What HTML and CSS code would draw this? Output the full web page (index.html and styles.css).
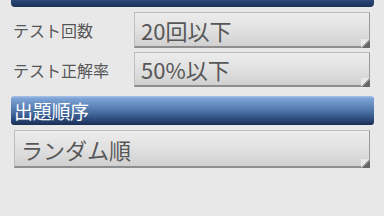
FILE: index.html
```html
<!DOCTYPE html>
<html lang="ja">
<head>
<meta charset="utf-8">
<link rel="stylesheet" href="styles.css">
</head>
<body>
<div class="page">
  <div class="topbar"></div>
  <div class="rows">
    <div class="row row1">
      <div class="label">テスト回数</div>
      <div class="select">20回以下</div>
    </div>
    <div class="row row2">
      <div class="label">テスト正解率</div>
      <div class="select">50%以下</div>
    </div>
  </div>
  <div class="section">出題順序</div>
  <div class="select wide">ランダム順</div>
</div>
</body>
</html>
```
FILE: styles.css
```css
html, body {
  margin: 0;
  padding: 0;
  background: #e8e8e8;
}
.page {
  width: 384px;
  height: 216px;
  display: flex;
  flex-direction: column;
  font-family: "Noto Sans CJK JP", "Noto Sans", sans-serif;
  color: #555;
}
.topbar {
  margin-left: 11px;
  width: 363px;
  height: 7px;
  border-radius: 0 0 4px 4px;
  background: linear-gradient(#2b4878, #1b3057);
}
.rows {
  display: flex;
  flex-direction: column;
  gap: 4px;
  margin-top: 5px;
  padding-left: 13px;
}
.row {
  display: flex;
  align-items: center;
}
.row1 { height: 36px; }
.row2 { height: 35px; }
.label {
  width: 121px;
  font-size: 16px;
  line-height: 16px;
  color: #575757;
}
.select {
  position: relative;
  box-sizing: border-box;
  width: 236px;
  height: 100%;
  display: flex;
  align-items: center;
  padding-left: 6px;
  font-size: 22px;
  line-height: 22px;
  color: #575757;
  background: linear-gradient(#ececec, #e1e1e1 50%, #d0d0d0);
  border: 1px solid #bdbdbd;
  border-right-color: #9a9a9a;
  border-bottom: 2px solid #8e8e8e;
}
.select::after {
  content: "";
  position: absolute;
  right: -1px;
  bottom: -2px;
  width: 9px;
  height: 9px;
  background: linear-gradient(135deg, #e8e8e8 0 48%, #9a9a9a 48% 58%, #666 58% 100%);
}
.section {
  margin-top: 9px;
  margin-left: 11px;
  width: 363px;
  height: 29px;
  box-sizing: border-box;
  border-radius: 3px;
  background: linear-gradient(#a9c4e8 0, #7ea3d6 8%, #4f76ab 50%, #2c4b7c 80%, #1a2d52 100%);
  color: #fff;
  font-size: 19px;
  line-height: 29px;
  padding-left: 3px;
  letter-spacing: -0.3px;
}
.wide {
  margin-top: 5px;
  margin-left: 14px;
  width: 356px;
  height: 38px;
  flex: none;
}
```
